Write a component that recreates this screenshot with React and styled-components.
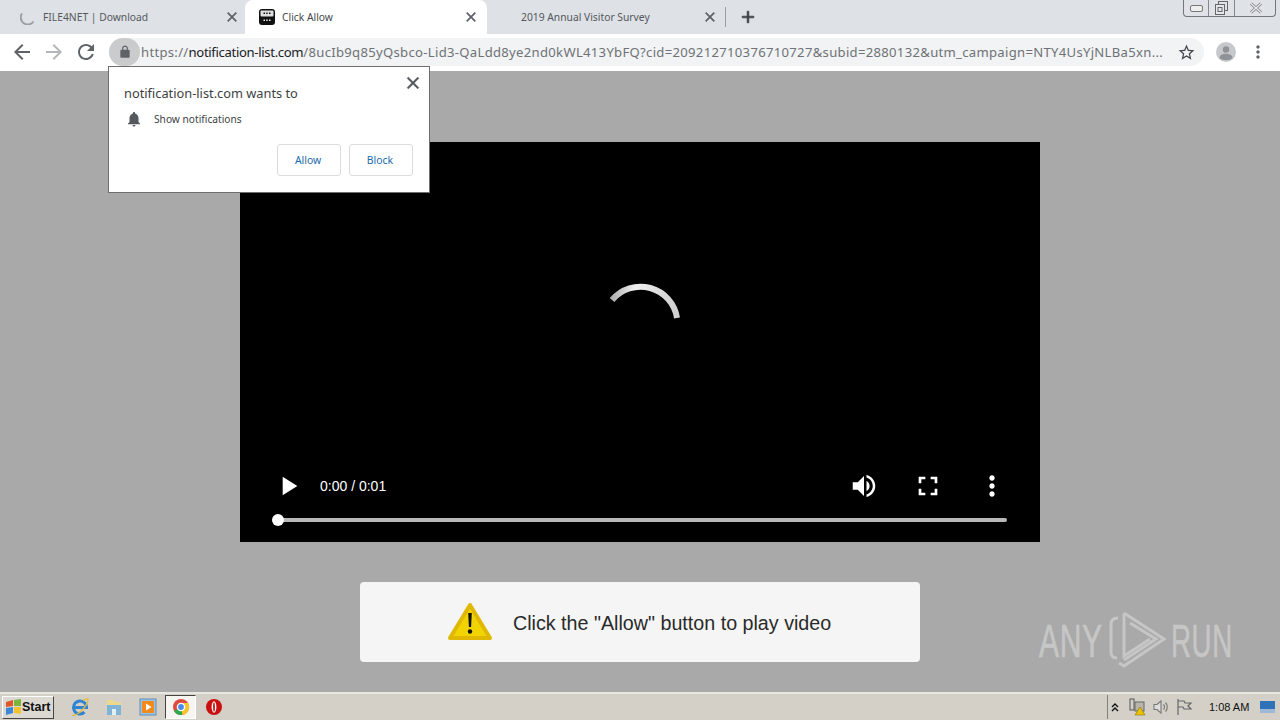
import React from 'react'
import styled, { createGlobalStyle } from 'styled-components'

const Global = createGlobalStyle`
  html, body { margin: 0; padding: 0; width: 1280px; height: 720px; overflow: hidden; }
  body { font-family: "Noto Sans", "Open Sans", sans-serif; }
  * { box-sizing: border-box; }
`

const paths = {
  back: 'M20 11H7.83l5.59-5.59L12 4l-8 8 8 8 1.41-1.41L7.83 13H20v-2z',
  forward: 'M12 4l-1.41 1.41L16.17 11H4v2h12.17l-5.58 5.59L12 20l8-8z',
  reload: 'M17.65 6.35C16.2 4.9 14.21 4 12 4c-4.42 0-7.99 3.58-7.99 8s3.57 8 7.99 8c3.73 0 6.84-2.55 7.73-6h-2.08c-.82 2.33-3.04 4-5.65 4-3.31 0-6-2.69-6-6s2.69-6 6-6c1.66 0 3.14.69 4.22 1.78L13 11h7V4l-2.35 2.35z',
  lock: 'M18 8h-1V6c0-2.76-2.24-5-5-5S7 3.24 7 6v2H6c-1.1 0-2 .9-2 2v10c0 1.1.9 2 2 2h12c1.1 0 2-.9 2-2V10c0-1.1-.9-2-2-2zM9 6c0-1.66 1.34-3 3-3s3 1.34 3 3v2H9V6z',
  star: 'M22 9.24l-7.19-.62L12 2 9.19 8.63 2 9.24l5.46 4.73L5.82 21 12 17.27 18.18 21l-1.63-7.03L22 9.24zM12 15.4l-3.76 2.27 1-4.28-3.32-2.88 4.38-.38L12 6.1l1.71 4.04 4.38.38-3.32 2.88 1 4.28L12 15.4z',
  bell: 'M12 22c1.1 0 2-.9 2-2h-4c0 1.1.9 2 2 2zm6-6v-5c0-3.07-1.63-5.64-4.5-6.32V4c0-.83-.67-1.5-1.5-1.5s-1.5.67-1.5 1.5v.68C7.64 5.36 6 7.92 6 11v5l-2 2v1h16v-1l-2-2z',
  play: 'M8 5v14l11-7z',
  volume: 'M3 9v6h4l5 5V4L7 9H3zm13.5 3c0-1.77-1.02-3.29-2.5-4.03v8.05c1.48-.73 2.5-2.25 2.5-4.02zM14 3.23v2.06c2.89.86 5 3.54 5 6.71s-2.11 5.85-5 6.71v2.06c4.01-.91 7-4.49 7-8.77s-2.99-7.86-7-8.77z',
  fullscreen: 'M7 14H5v5h5v-2H7v-3zm-2-4h2V7h3V5H5v5zm12 7h-3v2h5v-5h-2v3zM14 5v2h3v3h2V5h-5z',
  more: 'M12 8c1.1 0 2-.9 2-2s-.9-2-2-2-2 .9-2 2 .9 2 2 2zm0 2c-1.1 0-2 .9-2 2s.9 2 2 2 2-.9 2-2-.9-2-2-2zm0 6c-1.1 0-2 .9-2 2s.9 2 2 2 2-.9 2-2-.9-2-2-2z',
  plus: 'M19 13h-6v6h-2v-6H5v-2h6V5h2v6h6v2z',
  close: 'M19 6.41L17.59 5 12 10.59 6.41 5 5 6.41 10.59 12 5 17.59 6.41 19 12 13.41 17.59 19 19 17.59 13.41 12z',
}

const Icon = ({ name, size = 24, color = '#5f6368' }) => (
  <svg width={size} height={size} viewBox="0 0 24 24" fill={color} style={{ display: 'block', flex: 'none' }}>
    <path d={paths[name]} stroke={name === 'close' || name === 'plus' ? color : 'none'} strokeWidth={name === 'close' || name === 'plus' ? 0.8 : 0} />
  </svg>
)

const Page = styled.div`
  position: relative;
  width: 1280px;
  height: 720px;
  display: flex;
  flex-direction: column;
  overflow: hidden;
`

/* tab strip */
const TabStrip = styled.div`
  height: 34px;
  background: #dee1e6;
  display: flex;
  align-items: stretch;
  position: relative;
`
const Tab = styled.div`
  width: ${p => p.$w}px;
  display: flex;
  align-items: center;
  padding-left: ${p => p.$pad}px;
  padding-right: ${p => p.$right || 7}px;
  font-size: 10.3px;
  color: ${p => (p.$active ? '#45484c' : '#55585c')};
  background: ${p => (p.$active ? '#fff' : 'transparent')};
  border-radius: ${p => (p.$active ? '8px 8px 0 0' : '0')};
`
const TabTitle = styled.span`
  flex: 1;
  white-space: nowrap;
  margin-left: ${p => p.$gap || 0}px;
`
const Separator = styled.div`
  width: 1px;
  height: 20px;
  background: #9b9da1;
  align-self: center;
  margin-left: 1px;
`
const NewTab = styled.div`
  margin-left: 12px;
  align-self: center;
`
const WindowButtons = styled.div`
  position: absolute;
  top: 0;
  right: 4px;
  width: 93px;
  height: 17px;
  display: grid;
  grid-template-columns: 25px 26px 42px;
  border: 1px solid #73767b;
  border-top: none;
  border-radius: 0 0 4px 4px;
  background: #dfe2e7;
`
const WindowButton = styled.div`
  display: flex;
  align-items: center;
  justify-content: center;
  border-right: ${p => (p.$last ? 'none' : '1px solid #85888d')};
`

/* toolbar */
const Toolbar = styled.div`
  height: 37px;
  background: #fff;
  display: flex;
  align-items: center;
  padding-left: 10px;
`
const NavGroup = styled.div`
  display: flex;
  align-items: center;
  gap: 8px;
  margin-top: -1px;
`
const Omnibox = styled.div`
  width: 1095px;
  height: 28px;
  margin-left: 11px;
  margin-top: -1px;
  border-radius: 14px;
  background: #f1f3f4;
  display: flex;
  align-items: center;
`
const LockChip = styled.div`
  width: 31px;
  height: 28px;
  border-radius: 14px;
  background: #c9cbcd;
  display: flex;
  align-items: center;
  justify-content: center;
  flex: none;
`
const Url = styled.div`
  width: 1024px;
  font-size: 13.1px;
  color: #6f7276;
  white-space: nowrap;
  margin-left: 1px;
  letter-spacing: 0.3px;
  b { font-weight: 400; color: #202124; letter-spacing: -0.33px; }
`
const StarWrap = styled.div`
  margin-left: 12px;
`
const Avatar = styled.div`
  width: 20px;
  height: 20px;
  border-radius: 50%;
  background: #c6c8cb;
  margin-left: 12px;
  margin-top: -1px;
  flex: none;
  overflow: hidden;
`
const Menu = styled.div`
  margin-left: 12px;
  margin-top: -1px;
`

/* web content */
const Content = styled.main`
  flex: 1;
  background: #a9a9a9;
  display: flex;
  flex-direction: column;
  align-items: center;
  padding-top: 71px;
`
const Video = styled.div`
  position: relative;
  width: 800px;
  height: 400px;
  background: #000;
  display: flex;
  flex-direction: column;
  justify-content: flex-end;
  padding-bottom: 20px;
`
const Spinner = styled.svg`
  position: absolute;
  left: 364px;
  top: 138px;
`
const Controls = styled.div`
  height: 48px;
  display: flex;
  align-items: center;
  padding-left: 32px;
  margin-bottom: 8px;
`
const Time = styled.span`
  color: #fff;
  font-family: "Liberation Sans", Arial, sans-serif;
  font-size: 14px;
  margin-left: 16px;
  flex: 1;
`
const ControlButton = styled.div`
  width: 64px;
  display: flex;
  justify-content: center;
  margin-right: ${p => p.$end || 0}px;
`
const Track = styled.div`
  position: relative;
  height: 4px;
  margin-left: 38px;
  width: 729px;
  border-radius: 2px;
  background: #b8b8b8;
`
const Thumb = styled.div`
  position: absolute;
  left: -6px;
  top: -4px;
  width: 12px;
  height: 12px;
  border-radius: 50%;
  background: #fff;
`
const Banner = styled.div`
  width: 560px;
  height: 80px;
  margin-top: 40px;
  border-radius: 4px;
  background: #f5f5f5;
  display: flex;
  align-items: center;
  padding-left: 87px;
  gap: 20px;
  font-family: "Liberation Sans", Arial, sans-serif;
  font-size: 19.7px;
  color: #2a2a2a;
  span { position: relative; top: 1px; }
`

/* permission popup */
const Popup = styled.div`
  position: absolute;
  left: 108px;
  top: 66px;
  width: 322px;
  height: 127px;
  background: #fff;
  border: 1px solid #6e6e6e;
  padding: 17px 16px 0 15px;
`
const PopupClose = styled.div`
  position: absolute;
  right: 6px;
  top: 6px;
`
const PopupTitle = styled.div`
  font-size: 12.8px;
  line-height: 19px;
  color: #3c3f42;
`
const PopupRow = styled.div`
  display: flex;
  align-items: center;
  height: 18px;
  margin-top: 7px;
  padding-left: 1px;
  font-size: 10.2px;
  color: #3c3f42;
  gap: 11px;
`
const PopupActions = styled.div`
  display: flex;
  justify-content: flex-end;
  gap: 8px;
  margin-top: 16px;
`
const PopupButton = styled.div`
  width: 64px;
  height: 32px;
  border: 1px solid #dadce0;
  border-radius: 3px;
  display: flex;
  align-items: center;
  justify-content: center;
  padding-right: 2px;
  font-size: 10.4px;
  color: #1a6aa8;
`

/* watermark */
const Watermark = styled.div`
  position: absolute;
  left: 1039px;
  top: 608px;
  height: 64px;
  display: flex;
  align-items: center;
  gap: 6px;
  color: #c6c6c6;
`
const MarkText = styled.span`
  font-family: "Liberation Sans", Arial, sans-serif;
  font-size: 47px;
  font-weight: 400;
  line-height: 1;
  display: inline-block;
  width: ${p => p.$w}px;
  margin-left: ${p => p.$ml || 0}px;
  transform-origin: left center;
  transform: scaleX(${p => p.$s});
  white-space: nowrap;
  letter-spacing: 1px;
  -webkit-text-stroke: 0.7px #c6c6c6;
`

/* windows taskbar */
const Taskbar = styled.footer`
  height: 28px;
  background: #d4d0c8;
  border-top: 2px solid #e9e7e2;
  display: flex;
  align-items: center;
  padding-left: 2px;
  font-family: "Liberation Sans", Arial, sans-serif;
`
const StartButton = styled.div`
  width: 52px;
  height: 23px;
  display: flex;
  align-items: center;
  padding-left: 2px;
  font-size: 12.5px;
  font-weight: 700;
  color: #111;
  background: #dcd9d2;
  border: 1px solid;
  border-color: #fff #444 #444 #fff;
`
const QuickLaunch = styled.div`
  display: flex;
  align-items: center;
  margin-left: 9px;
  flex: 1;
`
const Launch = styled.div`
  width: ${p => p.$w || 34}px;
  height: 24px;
  display: flex;
  align-items: center;
  justify-content: center;
  background: ${p => (p.$active ? '#f6f5f2' : 'transparent')};
  border: ${p => (p.$active ? '1px solid' : 'none')};
  border-color: #444 #fff #fff #444;
`
const Tray = styled.div`
  width: 174px;
  height: 24px;
  margin-right: -1px;
  border-left: 1px solid #808080;
  display: flex;
  align-items: center;
  padding-left: 1px;
  font-size: 11px;
  color: #111;
`
const TrayGap = styled.span`
  width: ${p => p.$w}px;
  flex: none;
`
const Clock = styled.span`
  margin-left: 16px;
  width: 51px;
  flex: none;
`

const WinFlag = () => (
  <svg width="17" height="16" viewBox="0 0 17 16" style={{ flex: 'none' }}>
    <path d="M1 3l7-2v6l-7 1z" fill="#e2552b" />
    <path d="M9 1l7-1v7l-7 0z" fill="#7cb53d" />
    <path d="M1 9l7-1v6l-7 2z" fill="#3b87d8" />
    <path d="M9 8l7 0v7l-7-1z" fill="#f2c230" />
  </svg>
)

const FaviconBoard = () => (
  <svg width="16" height="16" viewBox="0 0 16 16" style={{ flex: 'none' }}>
    <rect width="16" height="16" rx="3" fill="#111" />
    <rect x="1.5" y="1.5" width="13" height="6" rx="1" fill="#dedede" />
    <path d="M4.5 3.5h1.5v1.5H4.5zM7.2 3.5h1.5v1.5H7.2zM10 3.5h1.5v1.5H10z" fill="#111" />
    <path d="M4.5 10.5h1.5v1.5H4.5zM7.2 10.5h1.5v1.5H7.2zM10 10.5h1.5v1.5H10z" fill="#eee" />
  </svg>
)

const LoadingArc = () => (
  <svg width="16" height="16" viewBox="0 0 16 16" style={{ flex: 'none' }}>
    <path d="M2 4.5a6.6 6.6 0 0 0 11.5 8" fill="none" stroke="#9aa0a6" strokeWidth="2" />
  </svg>
)

const WarningTriangle = () => (
  <svg width="46" height="40" viewBox="0 0 46 40" style={{ flex: 'none' }}>
    <path d="M23 3 L43 36 H3 Z" fill="#f2d500" stroke="#e0b800" strokeWidth="4" strokeLinejoin="round" />
    <path d="M21.2 11h3.600l-.7 14h-2.200z" fill="#111" />
    <circle cx="23" cy="29.5" r="2.2" fill="#111" />
  </svg>
)

const AnyRunLogo = () => (
  <svg width="58" height="62" viewBox="0 0 58 62" fill="none" stroke="#c6c6c6" strokeWidth="3">
    <path d="M9 9 C3 9 2 12 2 15 V43 C2 47 4 49 8 49" />
    <path d="M15 4 V47 L41 30" />
    <path d="M15 4 L55 30 L15 57 L10 54" />
    <path d="M21 14 L47 30 L15 51" />
  </svg>
)

const AvatarGlyph = () => (
  <svg width="20" height="20" viewBox="0 0 20 20" fill="#8f9296" style={{ display: 'block' }}>
    <circle cx="10" cy="7.5" r="3.2" />
    <path d="M3.5 16c0-3 3.500-4.200 6.500-4.200s6.500 1.200 6.500 4.200c-1.500 1.500-4 2.200-6.500 2.200s-5-.7-6.500-2.200z" />
  </svg>
)

const Flag = () => (
  <svg width="18" height="18" viewBox="0 0 18 18" fill="none" stroke="#666" strokeWidth="1.2" style={{ flex: 'none' }}>
    <path d="M3 1v16M3 3h6l1 2h6l-3 3 3 3H9l-1-2H3" />
  </svg>
)

const Network = () => (
  <svg width="18" height="18" viewBox="0 0 18 18" style={{ flex: 'none' }}>
    <rect x="1" y="1" width="4" height="11" fill="none" stroke="#555" />
    <rect x="6" y="4" width="9" height="9" fill="#b8b4aa" stroke="#666" />
    <path d="M11 9l5 8H6z" fill="#e8c400" stroke="#8a7400" strokeWidth="0.6" />
  </svg>
)

const Speaker = () => (
  <svg width="18" height="18" viewBox="0 0 18 18" fill="none" stroke="#777" strokeWidth="1.1" style={{ flex: 'none' }}>
    <path d="M2 6.5h3l4-3.5v12l-4-3.5H2z" fill="#ddd" />
    <path d="M11.5 6.5a3.5 3.5 0 0 1 0 5M13.5 4.5a6.5 6.5 0 0 1 0 9" />
  </svg>
)

const urlPath = '/8ucIb9q85yQsbco-Lid3-QaLdd8ye2nd0kWL413YbFQ?cid=209212710376710727&subid=2880132&utm_campaign=NTY4UsYjNLBa5xn...'

export default function App() {
  return (
    <Page>
      <Global />
      <TabStrip>
        <Tab $w={245} $pad={20} $right={5}>
          <LoadingArc />
          <TabTitle $gap={7}>FILE4NET | Download</TabTitle>
          <Icon name="close" size={16} />
        </Tab>
        <Tab $w={242} $active $pad={14} $right={8}>
          <FaviconBoard />
          <TabTitle $gap={7}>Click Allow</TabTitle>
          <Icon name="close" size={16} />
        </Tab>
        <Tab $w={237} $pad={34} $right={6}>
          <TabTitle>2019 Annual Visitor Survey</TabTitle>
          <Icon name="close" size={16} />
        </Tab>
        <Separator />
        <NewTab><Icon name="plus" size={20} color="#3c4043" /></NewTab>
        <WindowButtons>
          <WindowButton>
            <svg width="13" height="7"><rect x="0.5" y="0.5" width="12" height="6" rx="1.5" fill="#eee" stroke="#777" /></svg>
          </WindowButton>
          <WindowButton>
            <svg width="13" height="14" fill="none" stroke="#666"><rect x="3.5" y="0.5" width="9" height="9" /><rect x="0.5" y="3.5" width="9" height="10" fill="#e4e6ea" /><rect x="3" y="6.5" width="4" height="4" /></svg>
          </WindowButton>
          <WindowButton $last>
            <svg width="14" height="12" fill="none">
              <path d="M2 1.5l10 9M12 1.5l-10 9" stroke="#77797d" strokeWidth="3" />
              <path d="M2 1.5l10 9M12 1.5l-10 9" stroke="#eceef0" strokeWidth="1.4" />
            </svg>
          </WindowButton>
        </WindowButtons>
      </TabStrip>

      <Toolbar>
        <NavGroup>
          <Icon name="back" size={24} />
          <Icon name="forward" size={24} color="#b4b7ba" />
          <Icon name="reload" size={24} />
        </NavGroup>
        <Omnibox>
          <LockChip><Icon name="lock" size={14} /></LockChip>
          <Url>https://<b>notification-list.com</b>{urlPath}</Url>
          <StarWrap><Icon name="star" size={19} color="#45484c" /></StarWrap>
        </Omnibox>
        <Avatar><AvatarGlyph /></Avatar>
        <Menu><Icon name="more" size={20} /></Menu>
      </Toolbar>

      <Content>
        <Video>
          <Spinner width="80" height="50" viewBox="0 0 80 50">
            <defs>
              <linearGradient id="arc" x1="0" x2="1">
                <stop offset="0" stopColor="#b0b0b0" />
                <stop offset="0.35" stopColor="#f0f0f0" />
                <stop offset="1" stopColor="#cfcfcf" />
              </linearGradient>
            </defs>
            <path d="M8 20 A37 37 0 0 1 73 38" fill="none" stroke="url(#arc)" strokeWidth="6" />
          </Spinner>
          <Controls>
            <Icon name="play" size={32} color="#fff" />
            <Time>0:00 / 0:01</Time>
            <ControlButton><Icon name="volume" size={30} color="#fff" /></ControlButton>
            <ControlButton><Icon name="fullscreen" size={32} color="#fff" /></ControlButton>
            <ControlButton $end={16}><Icon name="more" size={32} color="#fff" /></ControlButton>
          </Controls>
          <Track><Thumb /></Track>
        </Video>
        <Banner>
          <WarningTriangle />
          <span>Click the "Allow" button to play video</span>
        </Banner>
      </Content>

      <Taskbar>
        <StartButton><WinFlag />Start</StartButton>
        <QuickLaunch>
          <Launch>
            <svg width="20" height="20" viewBox="0 0 20 20" fill="none">
              <path d="M4 10.5h12.5a6.5 6.5 0 1 0-2 4.7" stroke="#2f83d0" strokeWidth="3" />
              <path d="M2 18c2 1.500 8-2 12-7s5-9 3-9c-1 0-2.500.500-4 1.500" stroke="#e2b93b" strokeWidth="1.300" />
            </svg>
          </Launch>
          <Launch>
            <svg width="20" height="20" viewBox="0 0 20 20">
              <path d="M3 3h6l2 2h6v13H3z" fill="#ecd98f" />
              <rect x="3" y="8" width="14" height="10" fill="#7fb4d6" />
              <rect x="8" y="12" width="4" height="6" fill="#e4eef5" />
            </svg>
          </Launch>
          <Launch>
            <svg width="18" height="18" viewBox="0 0 18 18">
              <rect x="1" y="1" width="16" height="16" fill="#9cc3e0" stroke="#5d8fb8" />
              <rect x="3" y="3" width="12" height="12" rx="1" fill="#f08a1d" />
              <path d="M7 5.500v7l5.500-3.500z" fill="#fff" />
            </svg>
          </Launch>
          <Launch $active $w={31}>
            <svg width="18" height="18" viewBox="0 0 18 18">
              <circle cx="9" cy="9" r="8" fill="#dd4b3e" />
              <path d="M9 9L2 13a8 8 0 0 0 8.500 3.900z" fill="#2da94f" />
              <path d="M9 5h7.200a8 8 0 0 1-5.700 11.900L9 9z" fill="#f7c52b" />
              <circle cx="9" cy="9" r="3.600" fill="#4a8af0" stroke="#fff" strokeWidth="1.400" />
            </svg>
          </Launch>
          <Launch $w={36}>
            <svg width="18" height="18" viewBox="0 0 18 18">
              <circle cx="9" cy="9" r="8" fill="#c81010" />
              <ellipse cx="9" cy="9" rx="2.400" ry="5.800" fill="#fff" />
              <ellipse cx="9" cy="9" rx="0.900" ry="4.800" fill="#c81010" />
            </svg>
          </Launch>
        </QuickLaunch>
        <Tray>
          <svg width="12" height="12" viewBox="0 0 12 12" fill="none" stroke="#111" strokeWidth="1.400" style={{ flex: 'none' }}><path d="M3 6l3-3 3 3M3 10l3-3 3 3" /></svg>
          <TrayGap $w={8} />
          <Network />
          <TrayGap $w={5} />
          <Speaker />
          <TrayGap $w={5} />
          <Flag />
          <Clock>1:08 AM</Clock>
          <svg width="15" height="12" style={{ flex: 'none' }}><rect width="15" height="12" fill="#2e72b8" /><rect y="8" width="15" height="4" fill="#9db9d6" /></svg>
        </Tray>
      </Taskbar>

      <Popup>
        <PopupClose><Icon name="close" size={20} color="#55585c" /></PopupClose>
        <PopupTitle>notification-list.com wants to</PopupTitle>
        <PopupRow>
          <Icon name="bell" size={18} color="#55585c" />
          <span>Show notifications</span>
        </PopupRow>
        <PopupActions>
          <PopupButton>Allow</PopupButton>
          <PopupButton>Block</PopupButton>
        </PopupActions>
      </Popup>

      <Watermark>
        <MarkText $w={64} $s={0.64}>ANY</MarkText>
        <AnyRunLogo />
        <MarkText $w={60} $s={0.59} $ml={-2}>RUN</MarkText>
      </Watermark>
    </Page>
  )
}
